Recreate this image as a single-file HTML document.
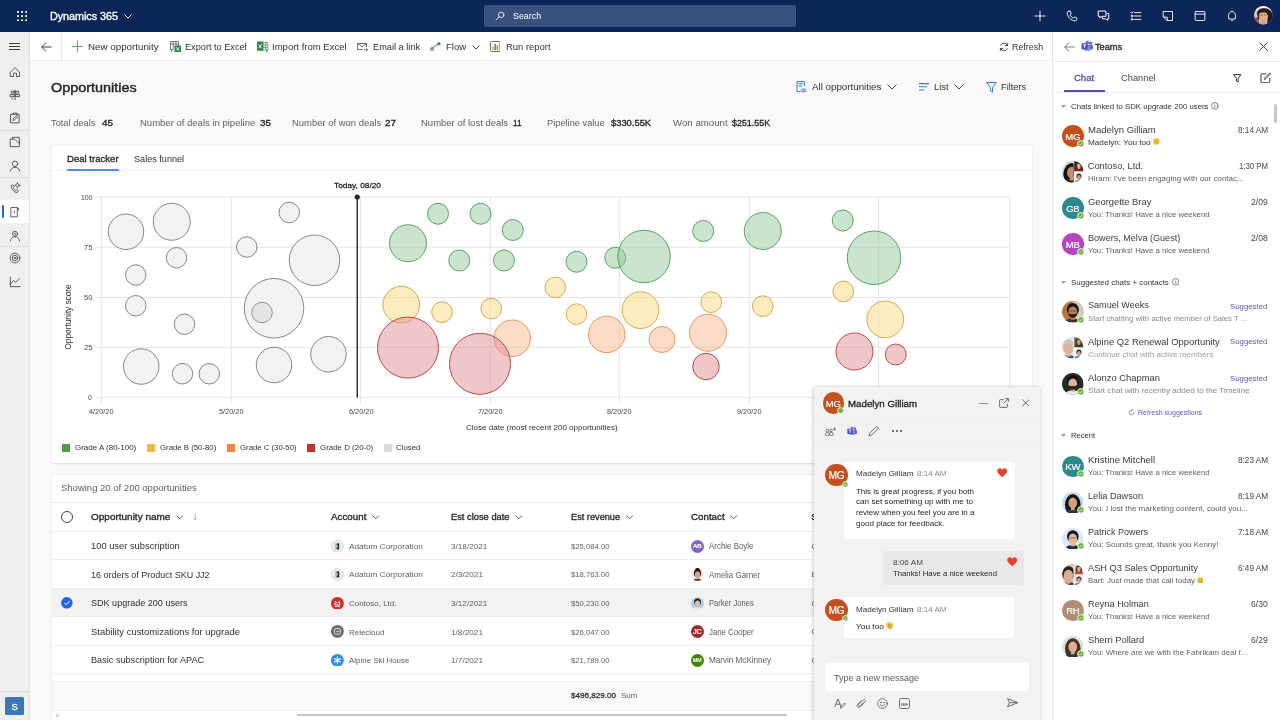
<!DOCTYPE html>
<html lang="en"><head><meta charset="utf-8"><title>Dynamics 365 - Opportunities</title><style>
*{box-sizing:border-box;margin:0;padding:0}
html,body{width:1280px;height:720px;overflow:hidden}
body{position:relative;background:#faf9f8;font-family:"Liberation Sans",sans-serif;color:#323130;font-size:10px}
.t{position:absolute;white-space:nowrap;line-height:16px;display:block;transform-origin:0 50%}
.b{position:absolute;display:block}
#app{position:absolute;left:0;top:0;width:1280px;height:720px;overflow:hidden;will-change:transform}
</style></head>
<body>
<div id="app">
<div class="b" style="left:0.00px;top:0.00px;width:1280.00px;height:32.00px;background:#0b2559;"></div>
<svg class="b" style="left:16.80px;top:10.90px;fill:#fff" width="10.4" height="10.4" viewBox="0 0 10.4 10.4"><circle cx="1" cy="1" r="1.05"/><circle cx="1" cy="5.1" r="1.05"/><circle cx="1" cy="9.2" r="1.05"/><circle cx="5.1" cy="1" r="1.05"/><circle cx="5.1" cy="5.1" r="1.05"/><circle cx="5.1" cy="9.2" r="1.05"/><circle cx="9.2" cy="1" r="1.05"/><circle cx="9.2" cy="5.1" r="1.05"/><circle cx="9.2" cy="9.2" r="1.05"/></svg>
<span id="t1" class="t" style="left:50.14px;top:9.00px;font-size:10.25px;-webkit-text-stroke:0.34px;color:#fff;transform:scaleX(1.0466);">Dynamics 365</span>
<svg class="b" style="left:124.00px;top:14.30px" width="8" height="5" viewBox="0 0 8 5" fill="none" stroke="#fff" stroke-width="1"><path d="M0.5 0.5 L4 4 L7.5 0.5"/></svg>
<div class="b" style="left:484.00px;top:5.00px;width:312.00px;height:22.00px;background:#3a5180;border-radius:2px;"></div>
<svg class="b" style="left:495.00px;top:10.80px;" width="10" height="10" viewBox="0 0 16 16" fill="none" stroke="#fff" stroke-width="1.3" stroke-linecap="round" stroke-linejoin="round"><circle cx="9.8" cy="6.2" r="4.4"/><path d="M6.6 9.4 L1.6 14.4"/></svg>
<span id="t2" class="t" style="left:512.87px;top:8.00px;font-size:8.90px;color:#fff;transform:scaleX(0.9980);">Search</span>
<svg class="b" style="left:1033.70px;top:9.80px;" width="12" height="12" viewBox="0 0 16 16" fill="none" stroke="#fff" stroke-width="1.2" stroke-linecap="round" stroke-linejoin="round"><path d="M8 1.5V14.5M1.5 8H14.5"/></svg>
<svg class="b" style="left:1065.80px;top:9.80px;" width="12" height="12" viewBox="0 0 16 16" fill="none" stroke="#fff" stroke-width="1.2" stroke-linecap="round" stroke-linejoin="round"><path d="M3.2 1.8 L5.6 1.4 L7 5 L5.4 6.4 C6.2 8.4 7.8 10 9.8 10.8 L11.2 9.2 L14.6 10.6 L14.2 13 C13.9 14.1 13 14.6 12 14.5 C6.5 14 2 9.5 1.6 4 C1.5 3 2.1 2.1 3.2 1.8Z"/></svg>
<svg class="b" style="left:1097.40px;top:9.30px;" width="13" height="13" viewBox="0 0 16 16" fill="none" stroke="#fff" stroke-width="1.2" stroke-linecap="round" stroke-linejoin="round"><path d="M2 2.5H11V9H6L3.5 11V9H2Z"/><path d="M12.5 5.5H14.5V12H13V14L10.5 12H6.5V10.5"/></svg>
<svg class="b" style="left:1129.80px;top:9.80px;" width="12" height="12" viewBox="0 0 16 16" fill="none" stroke="#fff" stroke-width="1.2" stroke-linecap="round" stroke-linejoin="round"><path d="M6 3.5H14.5M6 8H14.5M6 12.5H14.5"/><path d="M1.3 3.3 L2.4 4.4 L4.2 2.2"/><circle cx="2.7" cy="8" r="1.2"/><circle cx="2.7" cy="12.5" r="1.2"/></svg>
<svg class="b" style="left:1161.90px;top:9.80px;" width="12" height="12" viewBox="0 0 16 16" fill="none" stroke="#fff" stroke-width="1.2" stroke-linecap="round" stroke-linejoin="round"><path d="M2 2H14V14H7L2 9.5Z"/><path d="M2 9.5H7V14"/></svg>
<svg class="b" style="left:1193.80px;top:9.80px;" width="12" height="12" viewBox="0 0 16 16" fill="none" stroke="#fff" stroke-width="1.2" stroke-linecap="round" stroke-linejoin="round"><rect x="1.5" y="2" width="13" height="12" rx="1"/><path d="M1.5 5.5H14.5"/></svg>
<svg class="b" style="left:1225.90px;top:9.80px;" width="12" height="12" viewBox="0 0 16 16" fill="none" stroke="#fff" stroke-width="1.2" stroke-linecap="round" stroke-linejoin="round"><path d="M3.5 11.5V7C3.5 4.2 5.5 2 8 2S12.5 4.2 12.5 7V11.5Z"/><path d="M6.5 13.8C7 14.6 9 14.6 9.5 13.8"/></svg>
<svg class="b" style="left:1254.40px;top:6.30px;" width="18.6" height="18.6" viewBox="0 0 20 20"><defs><clipPath id="cu"><circle cx="10" cy="10" r="10"/></clipPath></defs><g clip-path="url(#cu)"><rect width="20" height="20" fill="#c9c7c8"/><rect x="0" y="0" width="20" height="5" fill="#f1f1f3"/><path d="M3.4 9C3 6 5 4 7 4L6.4 14L4.6 15Z" fill="#3a261d"/><path d="M0 13L4 12L6 20H0Z" fill="#a8402c"/><path d="M4 9C3 3.5 8 2 11 2.4C15 2 20 5 20 11V20H14L15 10Z" fill="#2a1a14"/><path d="M4.4 10C4 5 8 3.4 10.4 3.6C13.5 3.6 15.4 6 15 9.4L13.8 8L6 7.6Z" fill="#2e1d16"/><path d="M5.6 8.4C5.6 6.6 14 6.6 14.2 8.6C14.6 12 13.6 15 12.4 17L11.8 20H7.2L6.8 17C5.8 15 5.4 11.5 5.6 8.4Z" fill="#e2b08f"/><path d="M6.6 9.6H9M10.8 9.6H13.2" stroke="#4a332a" stroke-width="0.7"/><path d="M8.2 14.8C9.2 15.5 10.8 15.5 11.6 14.8" stroke="#b9776a" stroke-width="0.7" fill="none"/><path d="M5 20L7 16.5L12.4 16.8L15 20Z" fill="#d8a484"/></g></svg>
<div class="b" style="left:0.00px;top:32.00px;width:30.00px;height:688.00px;background:#efefef;border-right:1px solid #e3e3e3;"></div>
<svg class="b" style="left:9.00px;top:43.00px;" width="11" height="7" viewBox="0 0 11 7"><path d="M0 0.5H11M0 3.5H11M0 6.5H11" stroke="#403f3e" stroke-width="1" fill="none"/></svg>
<svg class="b" style="left:8.50px;top:66.20px;" width="12" height="12" viewBox="0 0 16 16" fill="none" stroke="#403f3e" stroke-width="1.1" stroke-linecap="round" stroke-linejoin="round"><path d="M2 8 L8 2.2 L14 8V14H10V9.5H6V14H2Z"/></svg>
<svg class="b" style="left:8.50px;top:89.00px;" width="12" height="12" viewBox="0 0 16 16" fill="none" stroke="#403f3e" stroke-width="1.1" stroke-linecap="round" stroke-linejoin="round"><path d="M8 1.5V14.5"/><path d="M3.5 3H7V5.5H3.5ZM9 3H13V5.5H9ZM2 7.5H7V10.2H2ZM9 7.5H14V10.2H9Z"/><path d="M3.5 12.5 L5 13.5"/></svg>
<svg class="b" style="left:8.50px;top:112.40px;" width="12" height="12" viewBox="0 0 16 16" fill="none" stroke="#403f3e" stroke-width="1.1" stroke-linecap="round" stroke-linejoin="round"><rect x="2.5" y="3" width="11" height="11.5"/><path d="M5.5 3V1.5H10.5V3"/><path d="M5.5 11 L6 8.5 L10.5 4.5 L12 6 L7.5 10.2Z"/></svg>
<div class="b" style="left:0.00px;top:130.00px;width:30.00px;height:1.00px;background:#e0e0e0;"></div>
<svg class="b" style="left:8.50px;top:135.80px;" width="12" height="12" viewBox="0 0 16 16" fill="none" stroke="#403f3e" stroke-width="1.1" stroke-linecap="round" stroke-linejoin="round"><path d="M4.5 4V1.8H13.8V9"/><path d="M2.2 4.2H7.4C9 4.2 9.6 8.6 13.8 8.6V14.2H2.2Z"/></svg>
<svg class="b" style="left:8.50px;top:159.50px;" width="12" height="12" viewBox="0 0 16 16" fill="none" stroke="#403f3e" stroke-width="1.1" stroke-linecap="round" stroke-linejoin="round"><circle cx="8" cy="5" r="3.6"/><path d="M1.6 14.8C2.2 11.6 4.8 9.8 8 9.8S13.8 11.6 14.4 14.8"/></svg>
<div class="b" style="left:0.00px;top:176.50px;width:30.00px;height:1.00px;background:#e0e0e0;"></div>
<svg class="b" style="left:8.50px;top:182.40px;" width="12" height="12" viewBox="0 0 16 16" fill="none" stroke="#403f3e" stroke-width="1.05" stroke-linecap="round" stroke-linejoin="round"><path d="M3 5.5 C3 10 6.5 13.8 11 14 L12.5 11.8 L10.3 10.3 L9 11.3 C7.5 10.5 6.2 9.2 5.6 7.6 L6.8 6.4 L5.4 4 Z"/><circle cx="11.3" cy="4.5" r="2.3"/><path d="M11.3 0.8V1.6M11.3 7.4V8.2M7.6 4.5H8.4M14.2 4.5H15"/></svg>
<div class="b" style="left:0.00px;top:200.00px;width:29.00px;height:23.00px;background:#fff;"></div>
<div class="b" style="left:2.20px;top:204.50px;width:2.20px;height:13.30px;background:#2266e3;border-radius:1.2px;"></div>
<svg class="b" style="left:8.50px;top:205.60px;" width="12" height="12" viewBox="0 0 16 16" fill="none" stroke="#403f3e" stroke-width="1.1" stroke-linecap="round" stroke-linejoin="round"><path d="M3 2H11V14.5H3Z"/><path d="M11 3H13V6"/><path d="M7 7V9"/></svg>
<svg class="b" style="left:8.50px;top:229.60px;" width="12" height="12" viewBox="0 0 16 16" fill="none" stroke="#403f3e" stroke-width="1.05" stroke-linecap="round" stroke-linejoin="round"><circle cx="8" cy="5.2" r="3.5"/><path d="M1.8 14.8C2.6 11.5 4.2 10 5.5 9.4M14.2 14.8C13.4 11.5 11.8 10 10.5 9.4"/><path d="M8 10V7.6C8 6.6 9.2 6.4 9.2 5.3 C9.2 4.4 8.6 4 8 4 S6.8 4.4 6.8 5"/></svg>
<div class="b" style="left:0.00px;top:246.00px;width:30.00px;height:1.00px;background:#e0e0e0;"></div>
<svg class="b" style="left:8.50px;top:252.40px;" width="12" height="12" viewBox="0 0 16 16" fill="none" stroke="#403f3e" stroke-width="1.1" stroke-linecap="round" stroke-linejoin="round"><circle cx="8" cy="8" r="6.5"/><circle cx="8" cy="8" r="3.6"/><circle cx="8" cy="8" r="1"/></svg>
<svg class="b" style="left:8.50px;top:275.80px;" width="12" height="12" viewBox="0 0 16 16" fill="none" stroke="#403f3e" stroke-width="1.1" stroke-linecap="round" stroke-linejoin="round"><path d="M1.8 1.5V14.2H14.5"/><path d="M1.8 11 L6 6 L9 8.5 L14 3.5"/></svg>
<div class="b" style="left:0.00px;top:691.00px;width:30.00px;height:1.00px;background:#e0e0e0;"></div>
<div class="b" style="left:5.20px;top:697.00px;width:18.60px;height:18.00px;background:#3b78b5;border-radius:1.5px;"></div>
<span id="t3" class="t" style="left:11.60px;top:699.00px;font-size:9.50px;-webkit-text-stroke:0.32px;color:#fff;">S</span>
<div class="b" style="left:30.00px;top:32.00px;width:1022.00px;height:29.00px;background:#fff;border-bottom:1px solid #f0efee;"></div>
<div class="b" style="left:61.00px;top:32.00px;width:1.00px;height:29.00px;background:#e8e7e6;"></div>
<svg class="b" style="left:41.00px;top:41.50px;" width="11" height="10" viewBox="0 0 11 10"><path d="M10.5 5H0.8M5 0.6 L0.7 5 L5 9.4" stroke="#3b3a39" stroke-width="1" fill="none"/></svg>
<svg class="b" style="left:72.00px;top:41.00px;" width="11" height="11" viewBox="0 0 16 16" fill="none" stroke="#4e9a51" stroke-width="1.3" stroke-linecap="round" stroke-linejoin="round"><path d="M8 0.5V15.5M0.5 8H15.5"/></svg>
<span id="t4" class="t" style="left:88.43px;top:39.00px;font-size:9.45px;transform:scaleX(1.0357);">New opportunity</span>
<svg class="b" style="left:170.00px;top:41.00px;" width="11" height="11" viewBox="0 0 11 11"><path d="M0.5 0.5H8.5V5M0.5 0.5V8.5H3M0.5 3H8.5M3.2 0.5V8.5M6 0.5V4.5" stroke="#7a7876" fill="none" stroke-width="1"/><rect x="4.5" y="4.5" width="6.5" height="6.5" fill="#2f8a47"/><path d="M6.3 6.3 L9.2 9.3M9.2 6.3 L6.3 9.3" stroke="#fff" stroke-width="1"/><path d="M1.5 9V11M0.6 10.2 L1.5 11 L2.4 10.2" stroke="#2f6fd6" fill="none" stroke-width="0.8"/></svg>
<span id="t5" class="t" style="left:185.43px;top:39.00px;font-size:9.45px;transform:scaleX(0.9711);">Export to Excel</span>
<svg class="b" style="left:257.00px;top:40.80px;" width="11.5" height="11.4" viewBox="0 0 11.5 11.4"><path d="M6 1.4H10.9V9H6M6 3.9H10.9M6 6.4H10.9M8.6 1.4V9" stroke="#8a8886" fill="none" stroke-width="0.9"/><rect x="0" y="0.6" width="6.4" height="9.2" rx="0.6" fill="#2f8a47"/><path d="M1.7 3.4 L4.7 7.2M4.7 3.4 L1.7 7.2" stroke="#fff" stroke-width="1"/><path d="M9.9 8.8V11M9 10.2 L9.9 11 L10.8 10.2" stroke="#2f6fd6" fill="none" stroke-width="0.8"/></svg>
<span id="t6" class="t" style="left:272.43px;top:39.00px;font-size:9.45px;transform:scaleX(1.0092);">Import from Excel</span>
<svg class="b" style="left:357.00px;top:42.00px;" width="11.5" height="10" viewBox="0 0 11.5 10"><path d="M0.5 1.5H9.5V5M0.5 1.5V7.5H5.5M0.5 1.5 L5 4.8 L9.5 1.5" stroke="#605e5c" fill="none" stroke-width="0.9"/><path d="M7 7.8H10.5M9.2 6.3 L10.8 7.8 L9.2 9.3" stroke="#605e5c" fill="none" stroke-width="0.9"/></svg>
<span id="t7" class="t" style="left:372.93px;top:39.00px;font-size:9.45px;transform:scaleX(0.9766);">Email a link</span>
<svg class="b" style="left:429.50px;top:42.00px;" width="11" height="9" viewBox="0 0 11 9"><circle cx="2" cy="7" r="1.3" stroke="#484644" fill="none" stroke-width="0.9"/><path d="M3 6 L7.5 2" stroke="#484644" stroke-width="0.9"/><rect x="7.4" y="0.3" width="3" height="3" rx="0.6" fill="#3a76d6"/></svg>
<span id="t8" class="t" style="left:445.93px;top:39.00px;font-size:9.45px;transform:scaleX(1.0099);">Flow</span>
<svg class="b" style="left:471.50px;top:44.80px" width="8" height="5" viewBox="0 0 8 5" fill="none" stroke="#484644" stroke-width="1"><path d="M0.5 0.5 L4 4 L7.5 0.5"/></svg>
<svg class="b" style="left:489.50px;top:41.00px;" width="10.5" height="11" viewBox="0 0 10.5 11"><rect x="0.5" y="0.5" width="9.5" height="10" rx="1" stroke="#605e5c" fill="#fff" stroke-width="0.9"/><rect x="2.2" y="5.5" width="1.6" height="3.5" fill="#f0a13a"/><rect x="4.4" y="3" width="1.6" height="6" fill="#4e9a51"/><rect x="6.6" y="4.3" width="1.6" height="4.7" fill="#e8743b"/></svg>
<span id="t9" class="t" style="left:505.93px;top:39.00px;font-size:9.45px;transform:scaleX(1.0009);">Run report</span>
<svg class="b" style="left:998.50px;top:41.50px;" width="10" height="10" viewBox="0 0 16 16" fill="none" stroke="#323130" stroke-width="1.3" stroke-linecap="round" stroke-linejoin="round"><path d="M13.5 5.5 A6 6 0 0 0 2.6 5.2"/><path d="M2.5 10.5 A6 6 0 0 0 13.4 10.8"/><path d="M13.8 2V5.6H10.2M2.2 14V10.4H5.8"/></svg>
<span id="t10" class="t" style="left:1011.93px;top:39.00px;font-size:9.45px;transform:scaleX(0.9422);">Refresh</span>
<span id="t11" class="t" style="left:50.68px;top:80.00px;font-size:13.70px;-webkit-text-stroke:0.43px;color:#252423;transform:scaleX(1.0519);">Opportunities</span>
<svg class="b" style="left:796.00px;top:81.00px;" width="11" height="12" viewBox="0 0 11 12"><path d="M1 0.6H8.6V5M1 0.6V10.6H4.5M2.6 2.8H7M2.6 5H6" stroke="#3a76d6" fill="none" stroke-width="1"/><path d="M4.8 9.4C5.8 7.4 9.4 7.4 10.6 9.4C9.4 11.4 5.8 11.4 4.8 9.4Z" stroke="#3a76d6" fill="none" stroke-width="0.9"/><circle cx="7.7" cy="9.4" r="0.9" fill="#3a76d6"/></svg>
<span id="t12" class="t" style="left:812.13px;top:79.00px;font-size:9.50px;transform:scaleX(1.0271);">All opportunities</span>
<svg class="b" style="left:887.00px;top:84.30px" width="10" height="6" viewBox="0 0 10 6" fill="none" stroke="#484644" stroke-width="1"><path d="M0.5 0.5 L5 5 L9.5 0.5"/></svg>
<svg class="b" style="left:918.50px;top:82.50px;" width="10.5" height="8" viewBox="0 0 10.5 8"><path d="M0 0.6H10.5M0 3.8H8M0 7H5.5" stroke="#3a76d6" stroke-width="1.1" fill="none"/></svg>
<span id="t13" class="t" style="left:934.03px;top:79.00px;font-size:9.50px;transform:scaleX(0.9962);">List</span>
<svg class="b" style="left:954.00px;top:84.30px" width="10" height="6" viewBox="0 0 10 6" fill="none" stroke="#484644" stroke-width="1"><path d="M0.5 0.5 L5 5 L9.5 0.5"/></svg>
<svg class="b" style="left:986.00px;top:81.50px;" width="11" height="11" viewBox="0 0 11 11"><path d="M0.6 0.6H10.4L6.6 5.4V10.2L4.4 8.8V5.4Z" stroke="#3a76d6" fill="none" stroke-width="1" stroke-linejoin="round"/></svg>
<span id="t14" class="t" style="left:1001.43px;top:79.00px;font-size:9.50px;transform:scaleX(0.9716);">Filters</span>
<span id="t15" class="t" style="left:50.93px;top:115.00px;font-size:9.45px;color:#605e5c;transform:scaleX(0.9825);">Total deals</span>
<span id="t16" class="t" style="left:102.25px;top:115.00px;font-size:9.20px;-webkit-text-stroke:0.31px;color:#252423;transform:scaleX(1.0847);">45</span>
<span id="t17" class="t" style="left:140.03px;top:115.00px;font-size:9.45px;color:#605e5c;transform:scaleX(1.0075);">Number of deals in pipeline</span>
<span id="t18" class="t" style="left:259.75px;top:115.00px;font-size:9.20px;-webkit-text-stroke:0.31px;color:#252423;transform:scaleX(1.0750);">35</span>
<span id="t19" class="t" style="left:291.63px;top:115.00px;font-size:9.45px;color:#605e5c;transform:scaleX(1.0005);">Number of won deals</span>
<span id="t20" class="t" style="left:385.45px;top:115.00px;font-size:9.20px;-webkit-text-stroke:0.31px;color:#252423;transform:scaleX(1.0847);">27</span>
<span id="t21" class="t" style="left:421.43px;top:115.00px;font-size:9.45px;color:#605e5c;transform:scaleX(1.0066);">Number of lost deals</span>
<span id="t22" class="t" style="left:512.95px;top:115.00px;font-size:9.20px;-webkit-text-stroke:0.31px;color:#252423;transform:scaleX(0.9010);">11</span>
<span id="t23" class="t" style="left:546.93px;top:115.00px;font-size:9.45px;color:#605e5c;transform:scaleX(0.9808);">Pipeline value</span>
<span id="t24" class="t" style="left:611.45px;top:115.00px;font-size:9.20px;-webkit-text-stroke:0.31px;color:#252423;transform:scaleX(1.0193);">$330.55K</span>
<span id="t25" class="t" style="left:672.93px;top:115.00px;font-size:9.45px;color:#605e5c;transform:scaleX(1.0242);">Won amount</span>
<span id="t26" class="t" style="left:732.45px;top:115.00px;font-size:9.20px;-webkit-text-stroke:0.31px;color:#252423;transform:scaleX(0.9684);">$251.55K</span>
<div class="b" style="left:51.50px;top:145.00px;width:980.00px;height:318.00px;background:#fff;box-shadow:0 0.5px 2px rgba(0,0,0,.13);border-radius:2px;"></div>
<div class="b" style="left:51.50px;top:170.00px;width:980.00px;height:1.00px;background:#f3f2f1;"></div>
<span id="t27" class="t" style="left:66.95px;top:151.00px;font-size:9.15px;-webkit-text-stroke:0.31px;color:#252423;transform:scaleX(1.0486);">Deal tracker</span>
<div class="b" style="left:67.00px;top:169.00px;width:52.00px;height:1.70px;background:#5a8bea;"></div>
<span id="t28" class="t" style="left:134.15px;top:151.00px;font-size:9.15px;transform:scaleX(0.9982);">Sales funnel</span>
<svg class="b" style="left:0;top:0" width="1053" height="470" viewBox="0 0 1053 470" fill="none"><path d="M96.25 197H1010" stroke="#e6e5e4" stroke-width="1"/><path d="M96.25 247.25H1010" stroke="#e6e5e4" stroke-width="1"/><path d="M96.25 297.5H1010" stroke="#e6e5e4" stroke-width="1"/><path d="M96.25 347.25H1010" stroke="#e6e5e4" stroke-width="1"/><path d="M96.25 397.25H1010" stroke="#e6e5e4" stroke-width="1"/><path d="M101.25 197V403.25" stroke="#e6e5e4" stroke-width="1"/><path d="M231.25 197V403.25" stroke="#e6e5e4" stroke-width="1"/><path d="M360.6 197V403.25" stroke="#e6e5e4" stroke-width="1"/><path d="M490.25 197V403.25" stroke="#e6e5e4" stroke-width="1"/><path d="M619.4 197V403.25" stroke="#e6e5e4" stroke-width="1"/><path d="M749.3 197V403.25" stroke="#e6e5e4" stroke-width="1"/><path d="M878.5 197V403.25" stroke="#e6e5e4" stroke-width="1"/><path d="M1009.8 197V403.25" stroke="#e6e5e4" stroke-width="1"/><defs><pattern id="pd" width="2" height="2" patternUnits="userSpaceOnUse"><rect width="1" height="1" fill="rgba(0,0,0,0.05)"/></pattern></defs><circle cx="126" cy="231.75" r="17.75" fill="#f3f2f1" stroke="#7d7b79" stroke-width="0.9"/><circle cx="171.75" cy="221.75" r="18.5" fill="#f3f2f1" stroke="#7d7b79" stroke-width="0.9"/><circle cx="289.25" cy="212.5" r="10.25" fill="#f3f2f1" stroke="#7d7b79" stroke-width="0.9"/><circle cx="246.75" cy="247" r="10.25" fill="#f3f2f1" stroke="#7d7b79" stroke-width="0.9"/><circle cx="176.5" cy="257.75" r="10.25" fill="#f3f2f1" stroke="#7d7b79" stroke-width="0.9"/><circle cx="135.75" cy="275" r="10.25" fill="#f3f2f1" stroke="#7d7b79" stroke-width="0.9"/><circle cx="314.5" cy="260.25" r="25.25" fill="#f3f2f1" stroke="#7d7b79" stroke-width="0.9"/><circle cx="135.75" cy="305.75" r="10.25" fill="#f3f2f1" stroke="#7d7b79" stroke-width="0.9"/><circle cx="184.5" cy="324.25" r="10.25" fill="#f3f2f1" stroke="#7d7b79" stroke-width="0.9"/><circle cx="274" cy="308.25" r="29.75" fill="#f3f2f1" stroke="#7d7b79" stroke-width="0.9"/><circle cx="141.25" cy="366.5" r="17.75" fill="#f3f2f1" stroke="#7d7b79" stroke-width="0.9"/><circle cx="182.5" cy="373.75" r="10.25" fill="#f3f2f1" stroke="#7d7b79" stroke-width="0.9"/><circle cx="209.25" cy="373.75" r="10.25" fill="#f3f2f1" stroke="#7d7b79" stroke-width="0.9"/><circle cx="274" cy="365" r="17.75" fill="#f3f2f1" stroke="#7d7b79" stroke-width="0.9"/><circle cx="328.5" cy="354.25" r="17.75" fill="#f3f2f1" stroke="#7d7b79" stroke-width="0.9"/><circle cx="262" cy="312.5" r="10.25" fill="#e6e4e3" stroke="#8a8886" stroke-width="0.9"/><circle cx="408" cy="243.25" r="18.5" fill="rgba(140,196,150,0.45)" stroke="#4c9950" stroke-width="0.9"/><circle cx="438" cy="213.75" r="10.5" fill="rgba(140,196,150,0.45)" stroke="#4c9950" stroke-width="0.9"/><circle cx="480.5" cy="213.75" r="10.5" fill="rgba(140,196,150,0.45)" stroke="#4c9950" stroke-width="0.9"/><circle cx="512.75" cy="230" r="10.5" fill="rgba(140,196,150,0.45)" stroke="#4c9950" stroke-width="0.9"/><circle cx="459.25" cy="260.5" r="10.5" fill="rgba(140,196,150,0.45)" stroke="#4c9950" stroke-width="0.9"/><circle cx="504" cy="260.5" r="10.5" fill="rgba(140,196,150,0.45)" stroke="#4c9950" stroke-width="0.9"/><circle cx="576.5" cy="261.75" r="10.5" fill="rgba(140,196,150,0.45)" stroke="#4c9950" stroke-width="0.9"/><circle cx="615.25" cy="257.75" r="10.5" fill="rgba(140,196,150,0.45)" stroke="#4c9950" stroke-width="0.9"/><circle cx="644" cy="256.5" r="26.25" fill="rgba(140,196,150,0.45)" stroke="#4c9950" stroke-width="0.9"/><circle cx="703.25" cy="231" r="10.5" fill="rgba(140,196,150,0.45)" stroke="#4c9950" stroke-width="0.9"/><circle cx="762.75" cy="231" r="18.5" fill="rgba(140,196,150,0.45)" stroke="#4c9950" stroke-width="0.9"/><circle cx="842.75" cy="220.5" r="10.5" fill="rgba(140,196,150,0.45)" stroke="#4c9950" stroke-width="0.9"/><circle cx="874" cy="257.75" r="26.75" fill="rgba(140,196,150,0.45)" stroke="#4c9950" stroke-width="0.9"/><circle cx="401.25" cy="304.65" r="18.35" fill="rgba(252,224,150,0.6)" stroke="#cf9f45" stroke-width="0.9"/><circle cx="442" cy="312.15" r="10.35" fill="rgba(252,224,150,0.6)" stroke="#cf9f45" stroke-width="0.9"/><circle cx="491.25" cy="308.65" r="10.35" fill="rgba(252,224,150,0.6)" stroke="#cf9f45" stroke-width="0.9"/><circle cx="555.25" cy="287.4" r="10.35" fill="rgba(252,224,150,0.6)" stroke="#cf9f45" stroke-width="0.9"/><circle cx="576.5" cy="314.15" r="10.35" fill="rgba(252,224,150,0.6)" stroke="#cf9f45" stroke-width="0.9"/><circle cx="640.5" cy="310.15" r="18.35" fill="rgba(252,224,150,0.6)" stroke="#cf9f45" stroke-width="0.9"/><circle cx="711.25" cy="302.15" r="10.35" fill="rgba(252,224,150,0.6)" stroke="#cf9f45" stroke-width="0.9"/><circle cx="762.75" cy="306.15" r="10.35" fill="rgba(252,224,150,0.6)" stroke="#cf9f45" stroke-width="0.9"/><circle cx="843.25" cy="291.4" r="10.35" fill="rgba(252,224,150,0.6)" stroke="#cf9f45" stroke-width="0.9"/><circle cx="885.25" cy="319.4" r="18.35" fill="rgba(252,224,150,0.6)" stroke="#cf9f45" stroke-width="0.9"/><circle cx="512.25" cy="338.25" r="18.25" fill="rgba(248,186,148,0.5)" stroke="#ec8a55" stroke-width="0.9"/><circle cx="606.75" cy="334.4" r="18.25" fill="rgba(248,186,148,0.5)" stroke="#ec8a55" stroke-width="0.9"/><circle cx="662" cy="339.5" r="13" fill="rgba(248,186,148,0.5)" stroke="#ec8a55" stroke-width="0.9"/><circle cx="708" cy="332.75" r="18.5" fill="rgba(248,186,148,0.5)" stroke="#ec8a55" stroke-width="0.9"/><circle cx="408" cy="347.6" r="30.5" fill="rgba(224,144,152,0.5)" stroke="#b13a38" stroke-width="0.9"/><circle cx="480" cy="363.75" r="30.5" fill="rgba(224,144,152,0.5)" stroke="#b13a38" stroke-width="0.9"/><circle cx="706" cy="366.5" r="13.25" fill="rgba(224,144,152,0.5)" stroke="#b13a38" stroke-width="0.9"/><circle cx="854.5" cy="351.5" r="18.5" fill="rgba(224,144,152,0.5)" stroke="#b13a38" stroke-width="0.9"/><circle cx="895.75" cy="354.5" r="10.5" fill="rgba(224,144,152,0.5)" stroke="#b13a38" stroke-width="0.9"/><path d="M357.25 197V397.5" stroke="#252423" stroke-width="1.4"/><circle cx="357.25" cy="197" r="2.6" fill="#252423"/></svg>
<span id="t29" class="t" style="left:334.03px;top:178.00px;font-size:7.90px;-webkit-text-stroke:0.27px;color:#252423;transform:scaleX(1.0525);">Today, 08/20</span>
<span id="t30" class="t" style="left:81.06px;top:190.00px;font-size:7.35px;color:#484644;transform:scaleX(0.9279);">100</span>
<span id="t31" class="t" style="left:84.06px;top:240.00px;font-size:7.35px;color:#484644;transform:scaleX(1.0256);">75</span>
<span id="t32" class="t" style="left:84.06px;top:290.00px;font-size:7.35px;color:#484644;transform:scaleX(1.0256);">50</span>
<span id="t33" class="t" style="left:84.06px;top:340.00px;font-size:7.35px;color:#484644;transform:scaleX(1.0256);">25</span>
<span id="t34" class="t" style="left:88.20px;top:390.00px;font-size:7.35px;color:#484644;transform:scaleX(0.9282);">0</span>
<span id="t35" class="t" style="left:89.31px;top:404.00px;font-size:7.35px;color:#484644;transform:scaleX(0.9986);">4/20/20</span>
<span id="t36" class="t" style="left:219.31px;top:404.00px;font-size:7.35px;color:#484644;transform:scaleX(0.9986);">5/20/20</span>
<span id="t37" class="t" style="left:348.66px;top:404.00px;font-size:7.35px;color:#484644;transform:scaleX(0.9986);">6/20/20</span>
<span id="t38" class="t" style="left:478.31px;top:404.00px;font-size:7.35px;color:#484644;transform:scaleX(0.9986);">7/20/20</span>
<span id="t39" class="t" style="left:607.46px;top:404.00px;font-size:7.35px;color:#484644;transform:scaleX(0.9986);">8/20/20</span>
<span id="t40" class="t" style="left:737.36px;top:404.00px;font-size:7.35px;color:#484644;transform:scaleX(0.9986);">9/20/20</span>
<span id="t41" class="t" style="left:465.77px;top:420.00px;font-size:8.05px;transform:scaleX(0.9976);">Close date (most recent 200 opportunities)</span>
<span class="t" style="left:32.5px;top:308.7px;width:70px;text-align:center;font-size:8.5px;color:#323130;transform:rotate(-90deg);transform-origin:50% 50%;letter-spacing:-0.1px">Opportunity score</span>
<div class="b" style="left:62.00px;top:443.50px;width:8.00px;height:8.00px;background:#4c9950;"></div>
<span id="t42" class="t" style="left:74.53px;top:440.00px;font-size:7.85px;transform:scaleX(1.0178);">Grade A (80-100)</span>
<div class="b" style="left:146.75px;top:443.50px;width:8.00px;height:8.00px;background:#f3b644;"></div>
<span id="t43" class="t" style="left:159.53px;top:440.00px;font-size:7.85px;transform:scaleX(0.9922);">Grade B (50-80)</span>
<div class="b" style="left:226.50px;top:443.50px;width:8.00px;height:8.00px;background:#f4873e;"></div>
<span id="t44" class="t" style="left:239.53px;top:440.00px;font-size:7.85px;transform:scaleX(0.9901);">Grade C (30-50)</span>
<div class="b" style="left:306.75px;top:443.50px;width:8.00px;height:8.00px;background:#c5322c;"></div>
<span id="t45" class="t" style="left:319.53px;top:440.00px;font-size:7.85px;transform:scaleX(1.0094);">Grade D (20-0)</span>
<div class="b" style="left:383.50px;top:443.50px;width:8.00px;height:8.00px;background:#dcdad9;"></div>
<span id="t46" class="t" style="left:396.03px;top:440.00px;font-size:7.85px;transform:scaleX(1.0009);">Closed</span>
<div class="b" style="left:51.50px;top:474.50px;width:980.00px;height:250.00px;background:#fff;box-shadow:0 0.5px 2px rgba(0,0,0,.13);border-radius:2px;"></div>
<span id="t47" class="t" style="left:61.13px;top:480.00px;font-size:9.50px;color:#605e5c;transform:scaleX(0.9999);">Showing 20 of 200 opportunities</span>
<div class="b" style="left:51.50px;top:502.00px;width:980.00px;height:1.00px;background:#edebe9;"></div>
<div class="b" style="left:51.50px;top:588.50px;width:980.00px;height:28.00px;background:#f3f2f1;"></div>
<div class="b" style="left:51.50px;top:530.50px;width:980.00px;height:1.00px;background:#efeeed;"></div>
<div class="b" style="left:51.50px;top:559.00px;width:980.00px;height:1.00px;background:#efeeed;"></div>
<div class="b" style="left:51.50px;top:587.50px;width:980.00px;height:1.00px;background:#efeeed;"></div>
<div class="b" style="left:51.50px;top:616.00px;width:980.00px;height:1.00px;background:#efeeed;"></div>
<div class="b" style="left:51.50px;top:644.50px;width:980.00px;height:1.00px;background:#efeeed;"></div>
<div class="b" style="left:51.50px;top:673.20px;width:980.00px;height:1.00px;background:#efeeed;"></div>
<div class="b" style="left:51.50px;top:681.00px;width:980.00px;height:29.50px;background:#faf9f8;border-top:1px solid #f1f0ef;border-bottom:1px solid #f1f0ef;"></div>
<div class="b" style="left:60.7px;top:510.7px;width:12.6px;height:12.6px;border:0.9px solid #484644;border-radius:50%"></div>
<span id="t48" class="t" style="left:90.74px;top:509.00px;font-size:9.30px;-webkit-text-stroke:0.31px;color:#252423;transform:scaleX(1.0745);">Opportunity name</span>
<svg class="b" style="left:175.55px;top:515.42px" width="7.5" height="4.75" viewBox="0 0 7.5 4.75" fill="none" stroke="#484644" stroke-width="0.9"><path d="M0.5 0.5 L3.75 3.75 L7 0.5"/></svg>
<svg class="b" style="left:192.60px;top:513.00px;" width="4.6" height="7.4" viewBox="0 0 4.6 7.4"><path d="M2.3 0.3V6.8M0.6 5.2 L2.3 6.9 L4 5.2" stroke="#a19f9d" stroke-width="0.75" fill="none"/></svg>
<span id="t49" class="t" style="left:331.14px;top:509.00px;font-size:9.30px;-webkit-text-stroke:0.31px;color:#252423;transform:scaleX(1.0542);">Account</span>
<svg class="b" style="left:371.95px;top:515.42px" width="7.5" height="4.75" viewBox="0 0 7.5 4.75" fill="none" stroke="#484644" stroke-width="0.9"><path d="M0.5 0.5 L3.75 3.75 L7 0.5"/></svg>
<span id="t50" class="t" style="left:451.04px;top:509.00px;font-size:9.30px;-webkit-text-stroke:0.31px;color:#252423;transform:scaleX(1.0019);">Est close date</span>
<svg class="b" style="left:515.05px;top:515.42px" width="7.5" height="4.75" viewBox="0 0 7.5 4.75" fill="none" stroke="#484644" stroke-width="0.9"><path d="M0.5 0.5 L3.75 3.75 L7 0.5"/></svg>
<span id="t51" class="t" style="left:571.04px;top:509.00px;font-size:9.30px;-webkit-text-stroke:0.31px;color:#252423;transform:scaleX(0.9897);">Est revenue</span>
<svg class="b" style="left:625.65px;top:515.42px" width="7.5" height="4.75" viewBox="0 0 7.5 4.75" fill="none" stroke="#484644" stroke-width="0.9"><path d="M0.5 0.5 L3.75 3.75 L7 0.5"/></svg>
<span id="t52" class="t" style="left:690.94px;top:509.00px;font-size:9.30px;-webkit-text-stroke:0.31px;color:#252423;transform:scaleX(1.0489);">Contact</span>
<svg class="b" style="left:730.25px;top:515.42px" width="7.5" height="4.75" viewBox="0 0 7.5 4.75" fill="none" stroke="#484644" stroke-width="0.9"><path d="M0.5 0.5 L3.75 3.75 L7 0.5"/></svg>
<span id="t53" class="t" style="left:811.30px;top:509.00px;font-size:9.50px;-webkit-text-stroke:0.32px;color:#252423;">S</span>
<span id="t54" class="t" style="left:90.75px;top:538.00px;font-size:9.15px;transform:scaleX(1.0236);">100 user subscription</span>
<svg class="b" style="left:331.20px;top:539.60px;" width="12.8" height="12.8" viewBox="0 0 12.8 12.8"><circle cx="6.4" cy="6.4" r="6" fill="#ececec" stroke="#d4d4d4" stroke-width="0.9"/><rect x="4.4" y="3.4" width="1.8" height="6" fill="#7db562"/><rect x="6" y="3.4" width="2.2" height="6" fill="#17264a"/><rect x="5.6" y="5" width="1" height="2.6" fill="#dfe9d8"/></svg>
<span id="t55" class="t" style="left:349.32px;top:539.00px;font-size:8.00px;color:#605e5c;transform:scaleX(1.0316);">Adatum Corporation</span>
<span id="t56" class="t" style="left:451.14px;top:539.00px;font-size:7.70px;color:#605e5c;transform:scaleX(1.0620);">3/18/2021</span>
<span id="t57" class="t" style="left:571.14px;top:539.00px;font-size:7.70px;color:#605e5c;transform:scaleX(1.0010);">$25,084.00</span>
<div class="b" style="left:691.20px;top:539.50px;width:13px;height:13px;border-radius:50%;background:#8661c5"></div>
<span id="t58" class="t" style="left:693.33px;top:538.00px;font-size:6.25px;-webkit-text-stroke:0.23px;color:#fff;transform:scaleX(1.0487);">AB</span>
<span id="t59" class="t" style="left:709.31px;top:539.00px;font-size:8.20px;color:#605e5c;transform:scaleX(0.9676);">Archie Boyle</span>
<span id="t60" class="t" style="left:811.50px;top:539.00px;font-size:8.00px;color:#605e5c;">C</span>
<span id="t61" class="t" style="left:90.75px;top:567.00px;font-size:9.15px;transform:scaleX(0.9824);">16 orders of Product SKU JJ2</span>
<svg class="b" style="left:331.20px;top:568.00px;" width="12.8" height="12.8" viewBox="0 0 12.8 12.8"><circle cx="6.4" cy="6.4" r="6" fill="#ececec" stroke="#d4d4d4" stroke-width="0.9"/><rect x="4.4" y="3.4" width="1.8" height="6" fill="#7db562"/><rect x="6" y="3.4" width="2.2" height="6" fill="#17264a"/><rect x="5.6" y="5" width="1" height="2.6" fill="#dfe9d8"/></svg>
<span id="t62" class="t" style="left:349.32px;top:567.00px;font-size:8.00px;color:#605e5c;transform:scaleX(1.0316);">Adatum Corporation</span>
<span id="t63" class="t" style="left:451.14px;top:567.00px;font-size:7.70px;color:#605e5c;transform:scaleX(1.0697);">2/3/2021</span>
<span id="t64" class="t" style="left:571.14px;top:567.00px;font-size:7.70px;color:#605e5c;transform:scaleX(1.0010);">$18,763.00</span>
<svg class="b" style="left:691.20px;top:567.90px" width="13" height="13" viewBox="0 0 20 20"><defs><clipPath id="c1"><circle cx="10" cy="10" r="10"/></clipPath></defs><g clip-path="url(#c1)"><svg x="0" y="0" width="20" height="20" viewBox="1.66667 1 16.6667 16.6667"><rect width="20" height="20" fill="#f1efec"/><ellipse cx="10" cy="21" rx="8.6" ry="6.6" fill="#4a2f2a"/><rect x="8.5" y="11.5" width="3" height="4" fill="#d9a587"/><ellipse cx="10" cy="2.6" rx="2.6" ry="2.2" fill="#21150f"/><ellipse cx="10" cy="7.7" rx="4.7" ry="5.1" fill="#21150f"/><ellipse cx="10" cy="9.6" rx="3.5" ry="4.3" fill="#d9a587"/></svg></g></svg>
<span id="t65" class="t" style="left:709.31px;top:568.00px;font-size:8.20px;color:#605e5c;transform:scaleX(0.9694);">Amelia Garner</span>
<span id="t66" class="t" style="left:811.50px;top:567.00px;font-size:8.00px;color:#605e5c;">E</span>
<span id="t67" class="t" style="left:90.75px;top:595.00px;font-size:9.15px;transform:scaleX(0.9907);">SDK upgrade 200 users</span>
<svg class="b" style="left:331.20px;top:596.60px;" width="12.8" height="12.8" viewBox="0 0 12.8 12.8"><circle cx="6.4" cy="6.4" r="6.4" fill="#cf2e2e"/><path d="M3.8 8 L4.4 4.4 L6.4 6.3 L8.4 4.4 L9 8Z" fill="none" stroke="#fff" stroke-width="0.9"/><path d="M3.8 9.4H9" stroke="#fff" stroke-width="0.9"/></svg>
<span id="t68" class="t" style="left:349.32px;top:596.00px;font-size:8.00px;color:#605e5c;transform:scaleX(0.9972);">Contoso, Ltd.</span>
<span id="t69" class="t" style="left:451.14px;top:596.00px;font-size:7.70px;color:#605e5c;transform:scaleX(1.0620);">3/12/2021</span>
<span id="t70" class="t" style="left:571.14px;top:596.00px;font-size:7.70px;color:#605e5c;transform:scaleX(1.0010);">$50,230.00</span>
<svg class="b" style="left:691.20px;top:596.50px" width="13" height="13" viewBox="0 0 20 20"><defs><clipPath id="c2"><circle cx="10" cy="10" r="10"/></clipPath></defs><g clip-path="url(#c2)"><svg x="0" y="0" width="20" height="20" viewBox="0.909091 0.545455 18.1818 18.1818"><rect width="20" height="20" fill="#a9cdf0"/><ellipse cx="10" cy="21" rx="8.6" ry="6.6" fill="#ececf0"/><rect x="8.5" y="11.5" width="3" height="4" fill="#e3b99d"/><ellipse cx="10" cy="7.7" rx="4.7" ry="5.1" fill="#1f1a18"/><ellipse cx="10" cy="9.6" rx="3.5" ry="4.3" fill="#e3b99d"/></svg></g></svg>
<span id="t71" class="t" style="left:709.31px;top:596.00px;font-size:8.20px;color:#605e5c;transform:scaleX(0.9260);">Parker Jones</span>
<span id="t72" class="t" style="left:811.50px;top:596.00px;font-size:8.00px;color:#605e5c;">C</span>
<span id="t73" class="t" style="left:90.75px;top:624.00px;font-size:9.15px;transform:scaleX(1.0344);">Stability customizations for upgrade</span>
<svg class="b" style="left:331.20px;top:625.20px;" width="12.8" height="12.8" viewBox="0 0 12.8 12.8"><circle cx="6.4" cy="6.4" r="6.4" fill="#6d6d6d"/><rect x="3.4" y="3.6" width="6" height="5.6" rx="1.6" fill="none" stroke="#d9d9d9" stroke-width="1"/><path d="M5 6.6H8.6" stroke="#d9d9d9" stroke-width="0.9"/></svg>
<span id="t74" class="t" style="left:349.32px;top:625.00px;font-size:8.00px;color:#605e5c;transform:scaleX(0.9938);">Relecloud</span>
<span id="t75" class="t" style="left:451.14px;top:625.00px;font-size:7.70px;color:#605e5c;transform:scaleX(1.0697);">1/8/2021</span>
<span id="t76" class="t" style="left:571.14px;top:625.00px;font-size:7.70px;color:#605e5c;transform:scaleX(1.0010);">$26,047.00</span>
<div class="b" style="left:691.20px;top:625.10px;width:13px;height:13px;border-radius:50%;background:#a4262c"></div>
<span id="t77" class="t" style="left:693.30px;top:624.00px;font-size:6.70px;-webkit-text-stroke:0.24px;color:#fff;transform:scaleX(1.0753);">JC</span>
<span id="t78" class="t" style="left:709.31px;top:625.00px;font-size:8.20px;color:#605e5c;transform:scaleX(0.9529);">Jane Cooper</span>
<span id="t79" class="t" style="left:811.50px;top:624.00px;font-size:8.00px;color:#605e5c;">C</span>
<span id="t80" class="t" style="left:90.75px;top:652.00px;font-size:9.15px;transform:scaleX(1.0014);">Basic subscription for APAC</span>
<svg class="b" style="left:331.20px;top:653.60px;" width="12.8" height="12.8" viewBox="0 0 12.8 12.8"><circle cx="6.4" cy="6.4" r="6.4" fill="#2f8fd8"/><path d="M6.4 2.6V10.2M3.1 4.5 L9.7 8.3M9.7 4.5 L3.1 8.3" stroke="#fff" stroke-width="1.1"/></svg>
<span id="t81" class="t" style="left:349.32px;top:653.00px;font-size:8.00px;color:#605e5c;transform:scaleX(0.9908);">Alpine Ski House</span>
<span id="t82" class="t" style="left:451.14px;top:653.00px;font-size:7.70px;color:#605e5c;transform:scaleX(1.0697);">1/7/2021</span>
<span id="t83" class="t" style="left:571.14px;top:653.00px;font-size:7.70px;color:#605e5c;transform:scaleX(1.0010);">$21,789.00</span>
<div class="b" style="left:691.20px;top:653.50px;width:13px;height:13px;border-radius:50%;background:#498205"></div>
<span id="t84" class="t" style="left:693.39px;top:652.00px;font-size:5.20px;-webkit-text-stroke:0.20px;color:#fff;transform:scaleX(0.9964);">MM</span>
<span id="t85" class="t" style="left:709.31px;top:653.00px;font-size:8.20px;color:#605e5c;transform:scaleX(0.9902);">Marvin McKinney</span>
<span id="t86" class="t" style="left:811.50px;top:653.00px;font-size:8.00px;color:#605e5c;">C</span>
<svg class="b" style="left:61.20px;top:597.20px;" width="11.6" height="11.6" viewBox="0 0 11.6 11.6"><circle cx="5.8" cy="5.8" r="5.8" fill="#2266e3"/><path d="M3.3 5.9 L5.1 7.7 L8.4 4.2" stroke="#fff" stroke-width="1" fill="none"/></svg>
<span id="t87" class="t" style="left:571.14px;top:688.00px;font-size:7.70px;-webkit-text-stroke:0.27px;transform:scaleX(1.0505);">$496,829.00</span>
<span id="t88" class="t" style="left:621.02px;top:688.00px;font-size:8.00px;color:#605e5c;transform:scaleX(1.0004);">Sum</span>
<div class="b" style="left:51.50px;top:710.50px;width:980.00px;height:9.50px;background:#fff;"></div>
<svg class="b" style="left:55.00px;top:712.50px;" width="4" height="5" viewBox="0 0 4 5"><path d="M3.5 0.3 L0.5 2.5 L3.5 4.7Z" fill="#c8c6c4"/></svg>
<div class="b" style="left:296.50px;top:713.60px;width:490.50px;height:2.60px;background:#c8c6c4;border-radius:1.3px;"></div>
<div class="b" style="left:1052.00px;top:32.00px;width:228.00px;height:688.00px;background:#fff;border-left:1px solid #e9e7e6;"></div>
<div class="b" style="left:1052.00px;top:61.00px;width:228.00px;height:1.00px;background:#edebe9;"></div>
<svg class="b" style="left:1064.00px;top:41.60px;" width="11" height="10" viewBox="0 0 11 10"><path d="M10.5 5H0.8M5 0.6 L0.7 5 L5 9.4" stroke="#605e5c" stroke-width="0.85" fill="none"/></svg>
<svg class="b" style="left:1080.75px;top:40.35px;" width="12.5" height="12.5" viewBox="0 0 16 16"><circle cx="12.2" cy="4" r="1.9" fill="#5b5fc7"/><rect x="9.6" y="6.2" width="5.6" height="6" rx="1.4" fill="#5b5fc7"/><circle cx="8" cy="3.2" r="2.5" fill="#7b83eb"/><rect x="4.2" y="6.2" width="8" height="7.6" rx="1.6" fill="#7b83eb"/><rect x="0.6" y="4" width="8" height="8" rx="1" fill="#4b53bc"/><path d="M2.6 6.2H6.6M4.6 6.2V10.4" stroke="#fff" stroke-width="1.1"/></svg>
<span id="t89" class="t" style="left:1095.47px;top:39.00px;font-size:8.80px;-webkit-text-stroke:0.30px;color:#252423;transform:scaleX(1.0438);">Teams</span>
<svg class="b" style="left:1259.30px;top:42.20px;" width="9" height="9" viewBox="0 0 9 9"><path d="M0.5 0.5 L8.5 8.5M8.5 0.5 L0.5 8.5" stroke="#484644" stroke-width="1" fill="none"/></svg>
<span id="t90" class="t" style="left:1074.45px;top:70.00px;font-size:9.10px;-webkit-text-stroke:0.30px;color:#4f52b2;transform:scaleX(1.0455);">Chat</span>
<div class="b" style="left:1064.40px;top:89.60px;width:40.60px;height:2.00px;background:#4f52b2;"></div>
<span id="t91" class="t" style="left:1121.44px;top:70.00px;font-size:9.30px;color:#484644;transform:scaleX(0.9993);">Channel</span>
<svg class="b" style="left:1232.50px;top:73.50px;" width="8.5" height="9" viewBox="0 0 8.5 9"><path d="M0.6 0.6H7.9L5.2 4.2V8L3.3 7V4.2Z" stroke="#323130" fill="none" stroke-width="1" stroke-linejoin="round"/></svg>
<svg class="b" style="left:1259.50px;top:71.50px;" width="11.5" height="11.5" viewBox="0 0 11.5 11.5"><path d="M6 1.8H2.2C1.5 1.8 1 2.3 1 3V9.6C1 10.3 1.5 10.8 2.2 10.8H8.6C9.3 10.8 9.8 10.3 9.8 9.6V6" stroke="#323130" fill="none" stroke-width="1"/><path d="M4.6 7.4 L5 5.6 L9.4 1.2 C9.9 0.7 10.8 1.6 10.3 2.1 L6 6.6Z" stroke="#323130" fill="none" stroke-width="0.9" stroke-linejoin="round"/></svg>
<div class="b" style="left:1052.00px;top:92.00px;width:228.00px;height:1.00px;background:#edebe9;"></div>
<div class="b" style="left:1273.60px;top:104.00px;width:3.60px;height:18.50px;background:#c8c6c4;border-radius:1.8px;"></div>
<svg class="b" style="left:1061.00px;top:104.60px;" width="5" height="3" viewBox="0 0 5 3"><path d="M0 0H5L2.5 3Z" fill="#a19f9d"/></svg>
<span id="t92" class="t" style="left:1071.23px;top:99.00px;font-size:7.85px;transform:scaleX(0.9981);">Chats linked to SDK upgrade 200 users</span>
<svg class="b" style="left:1211.30px;top:102.00px;" width="7.6" height="7.6" viewBox="0 0 16 16" fill="none" stroke="#484644" stroke-width="1.35" stroke-linecap="round" stroke-linejoin="round"><circle cx="8" cy="8" r="7"/><path d="M8 7.2V11.6M8 4.4V4.7"/></svg>
<svg class="b" style="left:1061.00px;top:280.60px;" width="5" height="3" viewBox="0 0 5 3"><path d="M0 0H5L2.5 3Z" fill="#a19f9d"/></svg>
<span id="t93" class="t" style="left:1071.23px;top:275.00px;font-size:7.85px;transform:scaleX(1.0129);">Suggested chats + contacts</span>
<svg class="b" style="left:1171.60px;top:278.00px;" width="7.6" height="7.6" viewBox="0 0 16 16" fill="none" stroke="#484644" stroke-width="1.35" stroke-linecap="round" stroke-linejoin="round"><circle cx="8" cy="8" r="7"/><path d="M8 7.2V11.6M8 4.4V4.7"/></svg>
<svg class="b" style="left:1061.00px;top:434.10px;" width="5" height="3" viewBox="0 0 5 3"><path d="M0 0H5L2.5 3Z" fill="#a19f9d"/></svg>
<span id="t94" class="t" style="left:1071.23px;top:428.00px;font-size:7.85px;transform:scaleX(0.9751);">Recent</span>
<div class="b" style="left:1062.00px;top:125.20px;width:21.60px;height:21.60px;border-radius:50%;background:#c4501e"></div>
<span class="t" style="left:1062.00px;top:129.00px;width:21.60px;text-align:center;font-size:9.5px;color:#fff;letter-spacing:-0.2px;-webkit-text-stroke:0.2px">MG</span>
<svg class="b" style="left:1076.70px;top:139.70px;" width="7.8" height="7.8" viewBox="0 0 7.8 7.8"><circle cx="3.9" cy="3.9" r="3.3" fill="#6bb23e" stroke="#fff" stroke-width="0.9"/><path d="M2.4 4 l1 1 l1.9 -2" stroke="#fff" stroke-width="0.7" fill="none"/></svg>
<span id="t95" class="t" style="left:1087.74px;top:122.00px;font-size:9.30px;color:#3b3a39;transform:scaleX(1.0253);">Madelyn Gilliam</span>
<span id="t96" class="t" style="left:1087.82px;top:135.00px;font-size:7.90px;transform:scaleX(1.0347);">Madelyn: You too</span>
<svg class="b" style="left:1153.10px;top:138.40px;" width="6.8" height="6.8" viewBox="0 0 10 10"><circle cx="5" cy="5" r="5" fill="#f7c64a"/><circle cx="3.3" cy="4" r="0.7" fill="#7a4b12"/><circle cx="6.7" cy="4" r="0.7" fill="#7a4b12"/><path d="M2.8 6.4C3.8 7.6 6.2 7.6 7.2 6.4" stroke="#7a4b12" stroke-width="0.7" fill="none"/></svg>
<span id="t97" class="t" style="left:1237.51px;top:123.00px;font-size:8.25px;color:#484644;transform:scaleX(0.9969);">8:14 AM</span>
<svg class="b" style="left:1062.00px;top:161.20px" width="21.6" height="21.6" viewBox="0 0 20 20"><defs><clipPath id="c3"><circle cx="10" cy="10" r="10"/></clipPath></defs><g clip-path="url(#c3)"><rect width="20" height="20" fill="#fff"/><svg x="0" y="0" width="10.6" height="20" viewBox="-0.5 1 15 16" preserveAspectRatio="xMidYMid slice"><rect width="20" height="20" fill="#c9d9e8"/><ellipse cx="10" cy="11" rx="6.3" ry="8.2" fill="#17120f"/><ellipse cx="10" cy="21" rx="8.6" ry="6.6" fill="#222"/><rect x="8.5" y="11.5" width="3" height="4" fill="#c98d70"/><ellipse cx="10" cy="7.7" rx="4.7" ry="5.1" fill="#17120f"/><ellipse cx="10" cy="9.6" rx="3.5" ry="4.3" fill="#c98d70"/></svg><svg x="11.3" y="0" width="8.7" height="9.6" viewBox="0 0 20 20" preserveAspectRatio="xMidYMid slice"><rect width="20" height="20" fill="#2b211f"/><ellipse cx="10" cy="11" rx="6.3" ry="8.2" fill="#6b2f20"/><ellipse cx="10" cy="21" rx="8.6" ry="6.6" fill="#8a1f1f"/><rect x="8.5" y="11.5" width="3" height="4" fill="#e2b394"/><ellipse cx="10" cy="7.7" rx="4.7" ry="5.1" fill="#6b2f20"/><ellipse cx="10" cy="9.6" rx="3.5" ry="4.3" fill="#e2b394"/></svg><svg x="11.3" y="10.3" width="8.7" height="9.7" viewBox="0 0 20 20" preserveAspectRatio="xMidYMid slice"><rect width="20" height="20" fill="#f2f3f5"/><ellipse cx="10" cy="21" rx="8.6" ry="6.6" fill="#8e9aa8"/><rect x="8.5" y="11.5" width="3" height="4" fill="#c99676"/><ellipse cx="10" cy="7.7" rx="4.7" ry="5.1" fill="#26262a"/><ellipse cx="10" cy="9.6" rx="3.5" ry="4.3" fill="#c99676"/></svg></g></svg>
<span id="t98" class="t" style="left:1087.74px;top:158.00px;font-size:9.30px;color:#3b3a39;transform:scaleX(1.0000);">Contoso, Ltd.</span>
<span id="t99" class="t" style="left:1087.82px;top:171.00px;font-size:7.90px;color:#605e5c;transform:scaleX(1.0110);">Hiram: I’ve been engaging with our contac...</span>
<span id="t100" class="t" style="left:1238.71px;top:159.00px;font-size:8.25px;color:#484644;transform:scaleX(0.9432);">1:30 PM</span>
<div class="b" style="left:1062.00px;top:197.20px;width:21.60px;height:21.60px;border-radius:50%;background:#2c8a8c"></div>
<span class="t" style="left:1062.00px;top:201.00px;width:21.60px;text-align:center;font-size:9.5px;color:#fff;letter-spacing:-0.2px;-webkit-text-stroke:0.2px">GB</span>
<svg class="b" style="left:1076.70px;top:211.70px;" width="7.8" height="7.8" viewBox="0 0 7.8 7.8"><circle cx="3.9" cy="3.9" r="3.3" fill="#6bb23e" stroke="#fff" stroke-width="0.9"/><path d="M2.4 4 l1 1 l1.9 -2" stroke="#fff" stroke-width="0.7" fill="none"/></svg>
<span id="t101" class="t" style="left:1087.74px;top:194.00px;font-size:9.30px;color:#3b3a39;transform:scaleX(1.0042);">Georgette Bray</span>
<span id="t102" class="t" style="left:1087.82px;top:207.00px;font-size:7.90px;color:#605e5c;transform:scaleX(0.9861);">You: Thanks! Have a nice weekend</span>
<span id="t103" class="t" style="left:1250.91px;top:195.00px;font-size:8.25px;color:#484644;transform:scaleX(1.0452);">2/09</span>
<div class="b" style="left:1062.00px;top:233.20px;width:21.60px;height:21.60px;border-radius:50%;background:#b345c0"></div>
<span class="t" style="left:1062.00px;top:237.00px;width:21.60px;text-align:center;font-size:9.5px;color:#fff;letter-spacing:-0.2px;-webkit-text-stroke:0.2px">MB</span>
<svg class="b" style="left:1076.70px;top:247.70px;" width="7.8" height="7.8" viewBox="0 0 7.8 7.8"><circle cx="3.9" cy="3.9" r="3.3" fill="#6bb23e" stroke="#fff" stroke-width="0.9"/><path d="M2.4 4 l1 1 l1.9 -2" stroke="#fff" stroke-width="0.7" fill="none"/></svg>
<span id="t104" class="t" style="left:1087.74px;top:230.00px;font-size:9.30px;color:#3b3a39;transform:scaleX(0.9753);">Bowers, Melva (Guest)</span>
<span id="t105" class="t" style="left:1087.82px;top:243.00px;font-size:7.90px;color:#605e5c;transform:scaleX(0.9861);">You: Thanks! Have a nice weekend</span>
<span id="t106" class="t" style="left:1250.91px;top:231.00px;font-size:8.25px;color:#484644;transform:scaleX(1.0452);">2/08</span>
<svg class="b" style="left:1062.00px;top:301.20px" width="21.6" height="21.6" viewBox="0 0 20 20"><defs><clipPath id="c4"><circle cx="10" cy="10" r="10"/></clipPath></defs><g clip-path="url(#c4)"><svg x="0" y="0" width="20" height="20" viewBox="1.66667 1 16.6667 16.6667"><rect width="20" height="20" fill="#b9783f"/><rect x="10" width="10" height="20" fill="#cfcac4"/><ellipse cx="10" cy="21" rx="8.6" ry="6.6" fill="#3a3230"/><rect x="8.5" y="11.5" width="3" height="4" fill="#b98560"/><ellipse cx="10" cy="7.7" rx="4.7" ry="5.1" fill="#1c1410"/><ellipse cx="10" cy="9.6" rx="3.5" ry="4.3" fill="#b98560"/><path d="M6.5 9.8C6.6 15.4 13.4 15.4 13.5 9.8C12.6 11.2 11.4 11.2 10 11.2S7.4 11.2 6.5 9.8Z" fill="#2a1c15"/><path d="M7 8.8H13" stroke="#222" stroke-width="0.45" opacity="0.8"/></svg></g></svg>
<svg class="b" style="left:1076.70px;top:315.70px;" width="7.8" height="7.8" viewBox="0 0 7.8 7.8"><circle cx="3.9" cy="3.9" r="3.3" fill="#6bb23e" stroke="#fff" stroke-width="0.9"/><path d="M2.4 4 l1 1 l1.9 -2" stroke="#fff" stroke-width="0.7" fill="none"/></svg>
<span id="t107" class="t" style="left:1087.74px;top:297.00px;font-size:9.30px;color:#3b3a39;transform:scaleX(0.9752);">Samuel Weeks</span>
<span id="t108" class="t" style="left:1087.82px;top:311.00px;font-size:7.90px;color:#8a8886;transform:scaleX(0.9766);">Start chatting with active member of Sales T ...</span>
<span id="t109" class="t" style="left:1230.33px;top:299.00px;font-size:7.80px;color:#585bb5;transform:scaleX(1.0011);">Suggested</span>
<svg class="b" style="left:1062.00px;top:337.20px" width="21.6" height="21.6" viewBox="0 0 20 20"><defs><clipPath id="c5"><circle cx="10" cy="10" r="10"/></clipPath></defs><g clip-path="url(#c5)"><rect width="20" height="20" fill="#fff"/><svg x="0" y="0" width="10.6" height="20" viewBox="2 1 15 16" preserveAspectRatio="xMidYMid slice"><rect width="20" height="20" fill="#dfe6f0"/><ellipse cx="10" cy="21" rx="8.6" ry="6.6" fill="#2b4f8c"/><rect x="8.5" y="11.5" width="3" height="4" fill="#dcb59c"/><ellipse cx="10" cy="7.7" rx="4.7" ry="5.1" fill="#c9c9cc"/><ellipse cx="10" cy="9.6" rx="3.5" ry="4.3" fill="#dcb59c"/></svg><svg x="11.3" y="0" width="8.7" height="9.6" viewBox="0 0 20 20" preserveAspectRatio="xMidYMid slice"><rect width="20" height="20" fill="#5d6b3c"/><ellipse cx="10" cy="11" rx="6.3" ry="8.2" fill="#5a3b28"/><ellipse cx="10" cy="21" rx="8.6" ry="6.6" fill="#3d3a34"/><rect x="8.5" y="11.5" width="3" height="4" fill="#d2a07e"/><ellipse cx="10" cy="7.7" rx="4.7" ry="5.1" fill="#5a3b28"/><ellipse cx="10" cy="9.6" rx="3.5" ry="4.3" fill="#d2a07e"/></svg><svg x="11.3" y="10.3" width="8.7" height="9.7" viewBox="0 0 20 20" preserveAspectRatio="xMidYMid slice"><rect width="20" height="20" fill="#f4f6f8"/><ellipse cx="10" cy="21" rx="8.6" ry="6.6" fill="#2f7f9c"/><rect x="8.5" y="11.5" width="3" height="4" fill="#d3a283"/><ellipse cx="10" cy="7.7" rx="4.7" ry="5.1" fill="#23201f"/><ellipse cx="10" cy="9.6" rx="3.5" ry="4.3" fill="#d3a283"/></svg></g></svg>
<span id="t110" class="t" style="left:1087.74px;top:334.00px;font-size:9.30px;color:#3b3a39;transform:scaleX(1.0121);">Alpine Q2 Renewal Opportunity</span>
<span id="t111" class="t" style="left:1087.82px;top:347.00px;font-size:7.90px;color:#a19f9d;transform:scaleX(1.0215);">Continue chat with active members</span>
<span id="t112" class="t" style="left:1230.33px;top:334.00px;font-size:7.80px;color:#585bb5;transform:scaleX(1.0011);">Suggested</span>
<svg class="b" style="left:1062.00px;top:373.20px" width="21.6" height="21.6" viewBox="0 0 20 20"><defs><clipPath id="c6"><circle cx="10" cy="10" r="10"/></clipPath></defs><g clip-path="url(#c6)"><svg x="0" y="0" width="20" height="20" viewBox="1.66667 1 16.6667 16.6667"><rect width="20" height="20" fill="#1f2d26"/><ellipse cx="10" cy="21" rx="8.6" ry="6.6" fill="#e9e9e9"/><rect x="8.5" y="11.5" width="3" height="4" fill="#dcb196"/><ellipse cx="10" cy="7.7" rx="4.7" ry="5.1" fill="#17130f"/><ellipse cx="10" cy="9.6" rx="3.5" ry="4.3" fill="#dcb196"/><path d="M6.5 9.8C6.6 15.4 13.4 15.4 13.5 9.8C12.6 11.2 11.4 11.2 10 11.2S7.4 11.2 6.5 9.8Z" fill="#2a211c"/></svg></g></svg>
<svg class="b" style="left:1076.70px;top:387.70px;" width="7.8" height="7.8" viewBox="0 0 7.8 7.8"><circle cx="3.9" cy="3.9" r="3.3" fill="#6bb23e" stroke="#fff" stroke-width="0.9"/><path d="M2.4 4 l1 1 l1.9 -2" stroke="#fff" stroke-width="0.7" fill="none"/></svg>
<span id="t113" class="t" style="left:1087.74px;top:370.00px;font-size:9.30px;color:#3b3a39;transform:scaleX(1.0096);">Alonzo Chapman</span>
<span id="t114" class="t" style="left:1087.82px;top:383.00px;font-size:7.90px;color:#8a8886;transform:scaleX(1.0266);">Start chat with recently added to the Timeline</span>
<span id="t115" class="t" style="left:1230.33px;top:371.00px;font-size:7.80px;color:#585bb5;transform:scaleX(1.0011);">Suggested</span>
<svg class="b" style="left:1127.90px;top:409.10px;" width="7" height="7" viewBox="0 0 16 16" fill="none" stroke="#5b5fc7" stroke-width="1.5" stroke-linecap="round" stroke-linejoin="round"><path d="M13.5 8 A5.5 5.5 0 1 1 8 2.5"/><path d="M8 0.5 L10.2 2.6 L8 4.6"/></svg>
<span id="t116" class="t" style="left:1138.48px;top:405.00px;font-size:7.05px;color:#585bb5;transform:scaleX(0.9984);">Refresh suggestions</span>
<div class="b" style="left:1062.00px;top:455.70px;width:21.60px;height:21.60px;border-radius:50%;background:#2c8a8c"></div>
<span class="t" style="left:1062.00px;top:459.00px;width:21.60px;text-align:center;font-size:9.5px;color:#fff;letter-spacing:-0.2px;-webkit-text-stroke:0.2px">KW</span>
<svg class="b" style="left:1076.70px;top:470.20px;" width="7.8" height="7.8" viewBox="0 0 7.8 7.8"><circle cx="3.9" cy="3.9" r="3.3" fill="#6bb23e" stroke="#fff" stroke-width="0.9"/><path d="M2.4 4 l1 1 l1.9 -2" stroke="#fff" stroke-width="0.7" fill="none"/></svg>
<span id="t117" class="t" style="left:1087.74px;top:452.00px;font-size:9.30px;color:#3b3a39;transform:scaleX(1.0308);">Kristine Mitchell</span>
<span id="t118" class="t" style="left:1087.82px;top:465.00px;font-size:7.90px;color:#605e5c;transform:scaleX(0.9861);">You: Thanks! Have a nice weekend</span>
<span id="t119" class="t" style="left:1237.51px;top:453.00px;font-size:8.25px;color:#484644;transform:scaleX(0.9969);">8:23 AM</span>
<svg class="b" style="left:1062.00px;top:491.50px" width="21.6" height="21.6" viewBox="0 0 20 20"><defs><clipPath id="c7"><circle cx="10" cy="10" r="10"/></clipPath></defs><g clip-path="url(#c7)"><svg x="0" y="0" width="20" height="20" viewBox="1.30435 0.782609 17.3913 17.3913"><rect width="20" height="20" fill="#c5dbf0"/><ellipse cx="10" cy="11" rx="6.3" ry="8.2" fill="#17110f"/><ellipse cx="10" cy="21" rx="8.6" ry="6.6" fill="#24364f"/><rect x="8.5" y="11.5" width="3" height="4" fill="#d3a081"/><ellipse cx="10" cy="7.7" rx="4.7" ry="5.1" fill="#17110f"/><ellipse cx="10" cy="9.6" rx="3.5" ry="4.3" fill="#d3a081"/></svg></g></svg>
<svg class="b" style="left:1076.70px;top:506.00px;" width="7.8" height="7.8" viewBox="0 0 7.8 7.8"><circle cx="3.9" cy="3.9" r="3.3" fill="#6bb23e" stroke="#fff" stroke-width="0.9"/><path d="M2.4 4 l1 1 l1.9 -2" stroke="#fff" stroke-width="0.7" fill="none"/></svg>
<span id="t120" class="t" style="left:1087.74px;top:488.00px;font-size:9.30px;color:#3b3a39;transform:scaleX(0.9854);">Lelia Dawson</span>
<span id="t121" class="t" style="left:1087.82px;top:501.00px;font-size:7.90px;color:#605e5c;transform:scaleX(1.0176);">You: I lost the marketing content, could you...</span>
<span id="t122" class="t" style="left:1237.51px;top:489.00px;font-size:8.25px;color:#484644;transform:scaleX(0.9969);">8:19 AM</span>
<svg class="b" style="left:1062.00px;top:527.50px" width="21.6" height="21.6" viewBox="0 0 20 20"><defs><clipPath id="c8"><circle cx="10" cy="10" r="10"/></clipPath></defs><g clip-path="url(#c8)"><svg x="0" y="0" width="20" height="20" viewBox="1.30435 0.782609 17.3913 17.3913"><rect width="20" height="20" fill="#dfe8f2"/><ellipse cx="10" cy="21" rx="8.6" ry="6.6" fill="#1d2b45"/><rect x="8.5" y="11.5" width="3" height="4" fill="#e1b699"/><ellipse cx="10" cy="7.7" rx="4.7" ry="5.1" fill="#11161d"/><ellipse cx="10" cy="9.6" rx="3.5" ry="4.3" fill="#e1b699"/><path d="M7 8.8H13" stroke="#222" stroke-width="0.45" opacity="0.8"/></svg></g></svg>
<svg class="b" style="left:1076.70px;top:542.00px;" width="7.8" height="7.8" viewBox="0 0 7.8 7.8"><circle cx="3.9" cy="3.9" r="3.3" fill="#6bb23e" stroke="#fff" stroke-width="0.9"/><path d="M2.4 4 l1 1 l1.9 -2" stroke="#fff" stroke-width="0.7" fill="none"/></svg>
<span id="t123" class="t" style="left:1087.74px;top:524.00px;font-size:9.30px;color:#3b3a39;transform:scaleX(0.9696);">Patrick Powers</span>
<span id="t124" class="t" style="left:1087.82px;top:537.00px;font-size:7.90px;color:#605e5c;transform:scaleX(1.0027);">You: Sounds great, thank you Kenny!</span>
<span id="t125" class="t" style="left:1237.51px;top:525.00px;font-size:8.25px;color:#484644;transform:scaleX(0.9969);">7:18 AM</span>
<svg class="b" style="left:1062.00px;top:563.50px" width="21.6" height="21.6" viewBox="0 0 20 20"><defs><clipPath id="c9"><circle cx="10" cy="10" r="10"/></clipPath></defs><g clip-path="url(#c9)"><rect width="20" height="20" fill="#fff"/><svg x="0" y="0" width="10.6" height="20" viewBox="2 1 15 16" preserveAspectRatio="xMidYMid slice"><rect width="20" height="20" fill="#cdbfae"/><ellipse cx="10" cy="21" rx="8.6" ry="6.6" fill="#5a4334"/><rect x="8.5" y="11.5" width="3" height="4" fill="#dcae90"/><ellipse cx="10" cy="7.7" rx="4.7" ry="5.1" fill="#2e221c"/><ellipse cx="10" cy="9.6" rx="3.5" ry="4.3" fill="#dcae90"/></svg><svg x="11.3" y="0" width="8.7" height="9.6" viewBox="0 0 20 20" preserveAspectRatio="xMidYMid slice"><rect width="20" height="20" fill="#e6c9c2"/><ellipse cx="10" cy="11" rx="6.3" ry="8.2" fill="#5a3527"/><ellipse cx="10" cy="21" rx="8.6" ry="6.6" fill="#b04a3f"/><rect x="8.5" y="11.5" width="3" height="4" fill="#d9a98c"/><ellipse cx="10" cy="7.7" rx="4.7" ry="5.1" fill="#5a3527"/><ellipse cx="10" cy="9.6" rx="3.5" ry="4.3" fill="#d9a98c"/></svg><svg x="11.3" y="10.3" width="8.7" height="9.7" viewBox="0 0 20 20" preserveAspectRatio="xMidYMid slice"><rect width="20" height="20" fill="#e9e4df"/><ellipse cx="10" cy="21" rx="8.6" ry="6.6" fill="#6f7f8f"/><rect x="8.5" y="11.5" width="3" height="4" fill="#d6a586"/><ellipse cx="10" cy="7.7" rx="4.7" ry="5.1" fill="#3a2a22"/><ellipse cx="10" cy="9.6" rx="3.5" ry="4.3" fill="#d6a586"/></svg></g></svg>
<span id="t126" class="t" style="left:1087.74px;top:560.00px;font-size:9.30px;color:#3b3a39;transform:scaleX(0.9930);">ASH Q3 Sales Opportunity</span>
<span id="t127" class="t" style="left:1087.82px;top:573.00px;font-size:7.90px;color:#605e5c;transform:scaleX(1.0086);">Bart: Just made that call today</span>
<svg class="b" style="left:1196.60px;top:576.70px;" width="6.8" height="6.8" viewBox="0 0 10 10"><circle cx="5" cy="5" r="5" fill="#f7c64a"/><circle cx="3.3" cy="4" r="0.7" fill="#7a4b12"/><circle cx="6.7" cy="4" r="0.7" fill="#7a4b12"/><path d="M2.8 6.4C3.8 7.6 6.2 7.6 7.2 6.4" stroke="#7a4b12" stroke-width="0.7" fill="none"/></svg>
<span id="t128" class="t" style="left:1237.51px;top:561.00px;font-size:8.25px;color:#484644;transform:scaleX(0.9969);">6:49 AM</span>
<div class="b" style="left:1062.00px;top:599.50px;width:21.60px;height:21.60px;border-radius:50%;background:#b08d74"></div>
<span class="t" style="left:1062.00px;top:603.00px;width:21.60px;text-align:center;font-size:9.5px;color:#fff;letter-spacing:-0.2px;-webkit-text-stroke:0.2px">RH</span>
<svg class="b" style="left:1076.70px;top:614.00px;" width="7.8" height="7.8" viewBox="0 0 7.8 7.8"><circle cx="3.9" cy="3.9" r="3.3" fill="#6bb23e" stroke="#fff" stroke-width="0.9"/><path d="M2.4 4 l1 1 l1.9 -2" stroke="#fff" stroke-width="0.7" fill="none"/></svg>
<span id="t129" class="t" style="left:1087.74px;top:596.00px;font-size:9.30px;color:#3b3a39;transform:scaleX(0.9889);">Reyna Holman</span>
<span id="t130" class="t" style="left:1087.82px;top:609.00px;font-size:7.90px;color:#605e5c;transform:scaleX(0.9861);">You: Thanks! Have a nice weekend</span>
<span id="t131" class="t" style="left:1250.91px;top:597.00px;font-size:8.25px;color:#484644;transform:scaleX(1.0452);">6/30</span>
<svg class="b" style="left:1062.00px;top:635.50px" width="21.6" height="21.6" viewBox="0 0 20 20"><defs><clipPath id="c10"><circle cx="10" cy="10" r="10"/></clipPath></defs><g clip-path="url(#c10)"><svg x="0" y="0" width="20" height="20" viewBox="1.30435 0.782609 17.3913 17.3913"><rect width="20" height="20" fill="#d6e6dc"/><ellipse cx="10" cy="11" rx="6.3" ry="8.2" fill="#4d3124"/><ellipse cx="10" cy="21" rx="8.6" ry="6.6" fill="#2b3a3a"/><rect x="8.5" y="11.5" width="3" height="4" fill="#ddb095"/><ellipse cx="10" cy="7.7" rx="4.7" ry="5.1" fill="#4d3124"/><ellipse cx="10" cy="9.6" rx="3.5" ry="4.3" fill="#ddb095"/></svg></g></svg>
<svg class="b" style="left:1076.70px;top:650.00px;" width="7.8" height="7.8" viewBox="0 0 7.8 7.8"><circle cx="3.9" cy="3.9" r="3.3" fill="#6bb23e" stroke="#fff" stroke-width="0.9"/><path d="M2.4 4 l1 1 l1.9 -2" stroke="#fff" stroke-width="0.7" fill="none"/></svg>
<span id="t132" class="t" style="left:1087.74px;top:632.00px;font-size:9.30px;color:#3b3a39;transform:scaleX(0.9980);">Sherri Pollard</span>
<span id="t133" class="t" style="left:1087.82px;top:645.00px;font-size:7.90px;color:#605e5c;transform:scaleX(0.9987);">You: Where are we with the Fabrikam deal f...</span>
<span id="t134" class="t" style="left:1250.91px;top:633.00px;font-size:8.25px;color:#484644;transform:scaleX(1.0452);">6/29</span>
<div class="b" style="left:813.75px;top:387.00px;width:226.25px;height:335.00px;background:#f3f2f1;border-radius:3px 3px 0 0;box-shadow:-1px 0 5px rgba(0,0,0,.16),0 0 2px rgba(0,0,0,.12);"></div>
<div class="b" style="left:813.75px;top:387.00px;width:226.25px;height:54.00px;background:#f3f2f1;border-radius:3px 3px 0 0;"></div>
<div class="b" style="left:813.75px;top:420.00px;width:226.25px;height:1.00px;background:#efeeed;"></div>
<div class="b" style="left:813.75px;top:441.00px;width:226.25px;height:1.00px;background:#eeedec;"></div>
<div class="b" style="left:822.65px;top:392.40px;width:21.20px;height:21.20px;border-radius:50%;background:#c4501e"></div>
<span class="t" style="left:822.65px;top:396.00px;width:21.20px;text-align:center;font-size:9.5px;color:#fff;letter-spacing:-0.2px;-webkit-text-stroke:0.2px">MG</span>
<svg class="b" style="left:837.40px;top:407.00px;" width="7.2" height="7.2" viewBox="0 0 7.2 7.2"><circle cx="3.6" cy="3.6" r="3" fill="#6bb23e" stroke="#f3f2f1" stroke-width="1"/></svg>
<span id="t135" class="t" style="left:848.44px;top:396.00px;font-size:9.30px;-webkit-text-stroke:0.31px;color:#252423;transform:scaleX(1.0449);">Madelyn Gilliam</span>
<svg class="b" style="left:978.50px;top:402.50px;" width="9.5" height="1.2" viewBox="0 0 9.5 1.2"><path d="M0 0.6H9.5" stroke="#8a8886" stroke-width="1"/></svg>
<svg class="b" style="left:999.00px;top:398.00px;" width="10" height="10" viewBox="0 0 10 10"><path d="M4.5 1.6H1.4C0.9 1.6 0.6 1.9 0.6 2.4V8.6C0.6 9.1 0.9 9.4 1.4 9.4H7.6C8.1 9.4 8.4 9.1 8.4 8.6V5.6" stroke="#605e5c" fill="none" stroke-width="0.9"/><path d="M6 0.6H9.4V4M9.3 0.7 L4.6 5.4" stroke="#605e5c" fill="none" stroke-width="0.9"/></svg>
<svg class="b" style="left:1021.50px;top:399.20px;" width="7.6" height="7.6" viewBox="0 0 7.6 7.6"><path d="M0.4 0.4 L7.2 7.2M7.2 0.4 L0.4 7.2" stroke="#605e5c" stroke-width="0.9" fill="none"/></svg>
<svg class="b" style="left:824.50px;top:426.80px;" width="11.5" height="9.5" viewBox="0 0 11.5 9.5"><circle cx="2.4" cy="3.4" r="1.3" stroke="#605e5c" fill="none" stroke-width="0.8"/><circle cx="6" cy="3.4" r="1.3" stroke="#605e5c" fill="none" stroke-width="0.8"/><rect x="0.6" y="5.6" width="3.6" height="3.2" rx="1.2" stroke="#605e5c" fill="none" stroke-width="0.8"/><rect x="4.6" y="5.6" width="3.6" height="3.2" rx="1.2" stroke="#605e5c" fill="none" stroke-width="0.8"/><path d="M9.6 0.4V3.6M8 2H11.2" stroke="#605e5c" stroke-width="0.8"/></svg>
<svg class="b" style="left:846.75px;top:426.05px;" width="10.5" height="10.5" viewBox="0 0 16 16"><circle cx="12.2" cy="4" r="1.9" fill="#5b5fc7"/><rect x="9.6" y="6.2" width="5.6" height="6" rx="1.4" fill="#5b5fc7"/><circle cx="8" cy="3.2" r="2.5" fill="#7b83eb"/><rect x="4.2" y="6.2" width="8" height="7.6" rx="1.6" fill="#7b83eb"/><rect x="0.6" y="4" width="8" height="8" rx="1" fill="#4b53bc"/><path d="M2.6 6.2H6.6M4.6 6.2V10.4" stroke="#fff" stroke-width="1.1"/></svg>
<svg class="b" style="left:868.00px;top:425.80px;" width="11" height="11" viewBox="0 0 11 11"><path d="M1 10 L1.8 7 L8.2 0.8 C9 0 10.8 1.8 10 2.6 L3.8 9Z" stroke="#605e5c" fill="none" stroke-width="0.9" stroke-linejoin="round"/></svg>
<svg class="b" style="left:891.50px;top:430.40px;" width="10" height="2" viewBox="0 0 10 2"><circle cx="1" cy="1" r="0.9" fill="#323130"/><circle cx="5" cy="1" r="0.9" fill="#323130"/><circle cx="9" cy="1" r="0.9" fill="#323130"/></svg>
<div class="b" style="left:843.50px;top:462.00px;width:171.00px;height:77.30px;background:#fff;border-radius:3px;"></div>
<div class="b" style="left:825.30px;top:464.10px;width:22.40px;height:22.40px;border-radius:50%;background:#c4501e"></div>
<span class="t" style="left:825.30px;top:468.00px;width:22.40px;text-align:center;font-size:10px;color:#fff;letter-spacing:-0.2px;-webkit-text-stroke:0.2px">MG</span>
<svg class="b" style="left:841.90px;top:480.60px;" width="6.8" height="6.8" viewBox="0 0 6.8 6.8"><circle cx="3.4" cy="3.4" r="2.8" fill="#6bb23e" stroke="#f3f2f1" stroke-width="0.9"/><path d="M1.9 3.5 l1 1 l1.9 -2" stroke="#fff" stroke-width="0.7" fill="none"/></svg>
<span id="t136" class="t" style="left:855.52px;top:466.00px;font-size:8.10px;transform:scaleX(0.9981);">Madelyn Gilliam</span>
<span id="t137" class="t" style="left:917.02px;top:466.00px;font-size:8.10px;color:#8a8886;transform:scaleX(0.9921);">8:14 AM</span>
<svg class="b" style="left:997.30px;top:468.00px;" width="10.4" height="9.4" viewBox="0 0 10.4 9.4"><path d="M5.2 9.2 C2 6.8 0.3 5 0.3 3 C0.3 1.4 1.5 0.3 2.9 0.3 C3.9 0.3 4.8 0.9 5.2 1.8 C5.6 0.9 6.5 0.3 7.5 0.3 C8.9 0.3 10.1 1.4 10.1 3 C10.1 5 8.4 6.8 5.2 9.2Z" fill="#e8432e"/></svg>
<span id="t138" class="t" style="left:855.52px;top:484.00px;font-size:8.05px;color:#252423;transform:scaleX(0.9914);">This is great progress, if you both</span>
<span id="t139" class="t" style="left:855.52px;top:494.00px;font-size:8.05px;color:#252423;transform:scaleX(1.0135);">can set something up with me to</span>
<span id="t140" class="t" style="left:855.52px;top:505.00px;font-size:8.05px;color:#252423;transform:scaleX(0.9918);">review when you feel you are in a</span>
<span id="t141" class="t" style="left:855.52px;top:516.00px;font-size:8.05px;color:#252423;transform:scaleX(1.0037);">good place for feedback.</span>
<div class="b" style="left:883.00px;top:550.80px;width:140.80px;height:34.20px;background:#e9e8e7;border-radius:3px;"></div>
<span id="t142" class="t" style="left:893.02px;top:555.00px;font-size:8.10px;color:#484644;transform:scaleX(1.0090);">8:06 AM</span>
<span id="t143" class="t" style="left:893.02px;top:566.00px;font-size:8.05px;color:#252423;transform:scaleX(0.9643);">Thanks! Have a nice weekend</span>
<svg class="b" style="left:1006.80px;top:556.60px;" width="10.4" height="9.4" viewBox="0 0 10.4 9.4"><path d="M5.2 9.2 C2 6.8 0.3 5 0.3 3 C0.3 1.4 1.5 0.3 2.9 0.3 C3.9 0.3 4.8 0.9 5.2 1.8 C5.6 0.9 6.5 0.3 7.5 0.3 C8.9 0.3 10.1 1.4 10.1 3 C10.1 5 8.4 6.8 5.2 9.2Z" fill="#e8432e"/></svg>
<div class="b" style="left:843.90px;top:596.80px;width:170.60px;height:41.20px;background:#fff;border-radius:3px;"></div>
<div class="b" style="left:825.30px;top:598.60px;width:22.40px;height:22.40px;border-radius:50%;background:#c4501e"></div>
<span class="t" style="left:825.30px;top:603.00px;width:22.40px;text-align:center;font-size:10px;color:#fff;letter-spacing:-0.2px;-webkit-text-stroke:0.2px">MG</span>
<svg class="b" style="left:841.90px;top:615.10px;" width="6.8" height="6.8" viewBox="0 0 6.8 6.8"><circle cx="3.4" cy="3.4" r="2.8" fill="#6bb23e" stroke="#f3f2f1" stroke-width="0.9"/><path d="M1.9 3.5 l1 1 l1.9 -2" stroke="#fff" stroke-width="0.7" fill="none"/></svg>
<span id="t144" class="t" style="left:855.52px;top:602.00px;font-size:8.10px;transform:scaleX(0.9981);">Madelyn Gilliam</span>
<span id="t145" class="t" style="left:917.02px;top:602.00px;font-size:8.10px;color:#8a8886;transform:scaleX(0.9921);">8:14 AM</span>
<span id="t146" class="t" style="left:855.52px;top:619.00px;font-size:8.05px;color:#252423;transform:scaleX(1.0351);">You too</span>
<svg class="b" style="left:885.90px;top:622.00px;" width="7.2" height="7.2" viewBox="0 0 10 10"><circle cx="5" cy="5" r="5" fill="#f7c64a"/><circle cx="3.3" cy="4" r="0.7" fill="#7a4b12"/><circle cx="6.7" cy="4" r="0.7" fill="#7a4b12"/><path d="M2.8 6.4C3.8 7.6 6.2 7.6 7.2 6.4" stroke="#7a4b12" stroke-width="0.7" fill="none"/></svg>
<div class="b" style="left:824.50px;top:662.50px;width:204.50px;height:28.80px;background:#fff;border-radius:3px;"></div>
<span id="t147" class="t" style="left:834.46px;top:670.00px;font-size:9.00px;color:#605e5c;transform:scaleX(1.0002);">Type a new message</span>
<svg class="b" style="left:834.00px;top:697.50px;" width="12" height="11" viewBox="0 0 12 11"><path d="M0.8 9 L4 1 L7.2 9M2 6.2H6" stroke="#605e5c" fill="none" stroke-width="0.9"/><path d="M6.4 10.4 L7 8.4 L10.4 5 L11.4 6 L8 9.6Z" stroke="#605e5c" fill="none" stroke-width="0.8"/></svg>
<svg class="b" style="left:856.00px;top:697.50px;" width="10" height="11" viewBox="0 0 10 11"><path d="M7.6 4.4 L4 8 C3 9 1.6 7.6 2.6 6.6 L7 2.2 C8.6 0.6 10.4 2.6 9 4 L4.4 8.8 C2.4 10.8 -0.2 8.2 1.8 6.2 L5.6 2.4" stroke="#605e5c" fill="none" stroke-width="0.8"/></svg>
<svg class="b" style="left:877.00px;top:697.50px;" width="11" height="11" viewBox="0 0 16 16" fill="none" stroke="#605e5c" stroke-width="1.2" stroke-linecap="round" stroke-linejoin="round"><circle cx="8" cy="8" r="7"/><circle cx="5.6" cy="6.4" r="0.5"/><circle cx="10.4" cy="6.4" r="0.5"/><path d="M4.8 9.8C6 11.8 10 11.8 11.2 9.8"/></svg>
<svg class="b" style="left:898.50px;top:697.50px;" width="11" height="11" viewBox="0 0 11 11"><rect x="0.5" y="0.5" width="10" height="10" rx="2" stroke="#605e5c" fill="none" stroke-width="0.9"/></svg>
<span id="t148" class="t" style="left:900.55px;top:697.00px;font-size:4.10px;-webkit-text-stroke:0.16px;color:#605e5c;transform:scaleX(1.0385);">GIF</span>
<svg class="b" style="left:1007.00px;top:698.40px;" width="11.5" height="9.4" viewBox="0 0 11.5 9.4"><path d="M0.6 0.6 L10.8 4.7 L0.6 8.8 L2.4 4.7Z M2.4 4.7H10.6" stroke="#605e5c" fill="none" stroke-width="0.9" stroke-linejoin="round"/></svg>
</div>
</body></html>
